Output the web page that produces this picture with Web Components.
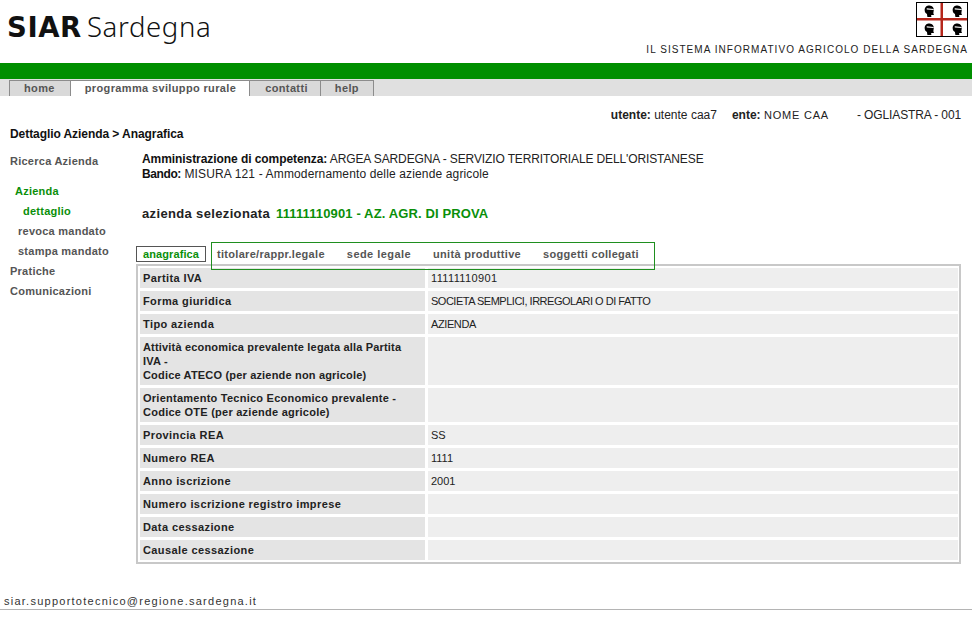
<!DOCTYPE html>
<html lang="it">
<head>
<meta charset="utf-8">
<title>SIAR Sardegna</title>
<style>
	html, body { margin: 0; background: #fff; }
	body { font: 12px 'Liberation Sans', Arial, sans-serif; color: #111; }
	siar-page { width: 972px; }
</style>
</head>
<body>
<siar-page>
	<siar-header slot="header"></siar-header>
	<siar-nav slot="nav">
		<nav-tab style="padding-right:15px">home</nav-tab>
		<nav-tab active style="padding-right:13px">programma sviluppo rurale</nav-tab>
		<nav-tab style="padding:0 12px 0 15px">contatti</nav-tab>
		<nav-tab>help</nav-tab>
	</siar-nav>
	<user-line slot="user"></user-line>
	<side-menu slot="side">
		<menu-item>Ricerca Azienda</menu-item>
		<menu-item level="top" active style="margin-top:10px">Azienda</menu-item>
		<menu-item level="sub" active>dettaglio</menu-item>
		<menu-item level="mid">revoca mandato</menu-item>
		<menu-item level="mid">stampa mandato</menu-item>
		<menu-item>Pratiche</menu-item>
		<menu-item>Comunicazioni</menu-item>
	</side-menu>
	<azienda-info slot="main"></azienda-info>
	<tab-strip slot="main"></tab-strip>
	<data-panel slot="main">
		<data-row label="Partita IVA" style="--value-spacing:.36px">11111110901</data-row>
		<data-row label="Forma giuridica" style="--value-spacing:-.49px">SOCIETA SEMPLICI, IRREGOLARI O DI FATTO</data-row>
		<data-row label="Tipo azienda" style="--value-spacing:-.4px">AZIENDA</data-row>
		<data-row label="Attività economica prevalente legata alla Partita IVA -&#10;Codice ATECO (per aziende non agricole)" style="--label-spacing:.18px"></data-row>
		<data-row label="Orientamento Tecnico Economico prevalente -&#10;Codice OTE (per aziende agricole)" style="--label-spacing:.25px"></data-row>
		<data-row label="Provincia REA">SS</data-row>
		<data-row label="Numero REA">1111</data-row>
		<data-row label="Anno iscrizione">2001</data-row>
		<data-row label="Numero iscrizione registro imprese"></data-row>
		<data-row label="Data cessazione"></data-row>
		<data-row label="Causale cessazione"></data-row>
	</data-panel>
	<siar-footer slot="footer"></siar-footer>
</siar-page>

<script>
const html = String.raw;

function define(name, markup, setup) {
	customElements.define(name, class extends HTMLElement {
		constructor() {
			super();
			this.attachShadow({ mode: 'open' }).innerHTML = markup;
		}
		connectedCallback() {
			if (setup) setup(this);
		}
	});
}

define('siar-page', html`
	<style>
		:host { display: block; }
		.body { display: flex; }
		.side { width: 136px; flex: none; }
		.main { width: 825px; flex: none; }
	</style>
	<slot name="header"></slot>
	<slot name="nav"></slot>
	<slot name="user"></slot>
	<div class="body">
		<div class="side"><slot name="side"></slot></div>
		<div class="main"><slot name="main"></slot></div>
	</div>
	<slot name="footer"></slot>
`);

// the moor's head, drawn once and reused in each quarter of the flag
const moor = html`
	<path d="M1.5 4.5 C1.5 1.5 4 .2 6 .4 C8.6 .6 10 2.4 9.8 4.6 L9.4 7.4 L10 9 L7.4 9 L7.6 11 L4 11 L3.6 8.2 C2.2 7.4 1.5 6.2 1.5 4.5 Z" fill="#000"/>
	<path d="M3.4 3 L9.6 3.7 L9.7 4.5 L3.4 4 Z" fill="#fff"/>
`;

define('siar-header', html`
	<style>
		:host { display: flex; justify-content: space-between; height: 63px; overflow: hidden; }
		.logo { display: flex; align-items: baseline; padding: 9px 0 0 7px; line-height: 36px; color: #111; white-space: nowrap; }
		.logo b { font: bold 27.5px/36px 'DejaVu Sans', sans-serif; letter-spacing: .6px; }
		.logo span { font: 300 27.5px/36px 'Noto Sans', sans-serif; margin-left: 5px; letter-spacing: .65px; }
		.right { display: flex; flex-direction: column; align-items: flex-end; padding: 2px 4px 0 0; }
		svg { display: block; }
		.tag { margin-top: 7px; font: 10px/12px 'Liberation Sans', sans-serif; letter-spacing: 1.05px; color: #222; white-space: nowrap; }
	</style>
	<div class="logo"><b>SIAR</b><span>Sardegna</span></div>
	<div class="right">
		<svg width="52" height="35" viewBox="0 0 52 35">
			<rect x=".5" y=".5" width="51" height="34" fill="#fff" stroke="#000"/>
			<path d="M24.5 1h2.5v33h-2.5zM1 16h50v2.6H1z" fill="#b5261b"/>
			<g transform="translate(7 3) scale(1.1)">${moor}</g>
			<g transform="translate(35 3) scale(1.1)">${moor}</g>
			<g transform="translate(7 21) scale(1.1)">${moor}</g>
			<g transform="translate(35 21) scale(1.1)">${moor}</g>
		</svg>
		<div class="tag">IL SISTEMA INFORMATIVO AGRICOLO DELLA SARDEGNA</div>
	</div>
`);

define('siar-nav', html`
	<style>
		:host { display: block; border-top: 16px solid #008f00; background: #e0e0e0; height: 17px; }
		.tabs { display: flex; padding: 1px 0 0 9px; }
	</style>
	<div class="tabs"><slot></slot></div>
`);

define('nav-tab', html`
	<style>
		:host { display: block; height: 15px; padding: 0 14px; margin-right: -1px; border: 1px solid #8c8c8c; border-bottom: 0; background: #d9d9d9; font: bold 11px/15px 'Liberation Sans', sans-serif; letter-spacing: .36px; color: #555; white-space: nowrap; }
		:host([active]) { background: #fff; }
	</style>
	<slot></slot>
`);

define('user-line', html`
	<style>
		:host { display: flex; justify-content: flex-end; height: 37px; padding: 12px 11px 0 0; box-sizing: border-box; font: 12px/14px 'Liberation Sans', sans-serif; color: #222; position: relative; }
		.ente { margin-left: 15px; }
		.nome { letter-spacing: .8px; font-size: 11px; }
		.prov { margin-left: 28px; letter-spacing: -.12px; }
		.crumb { position: absolute; left: 10px; top: 31px; font: bold 12px/15px 'Liberation Sans', sans-serif; letter-spacing: -.07px; color: #111; }
	</style>
	<span><b>utente:</b> utente caa7</span>
	<span class="ente"><b>ente:</b> <span class="nome">NOME CAA</span></span>
	<span class="prov">- OGLIASTRA - 001</span>
	<div class="crumb">Dettaglio Azienda &gt; Anagrafica</div>
`);

define('side-menu', html`
	<style>
		:host { display: block; padding-top: 18px; }
	</style>
	<slot></slot>
`);

define('menu-item', html`
	<style>
		:host { display: block; height: 20px; padding-left: 10px; font: bold 11px/20px 'Liberation Sans', sans-serif; letter-spacing: .25px; color: #555; white-space: nowrap; }
		:host([level=top]) { padding-left: 15px; }
		:host([level=mid]) { padding-left: 18px; }
		:host([level=sub]) { padding-left: 23px; }
		:host([active]) { color: #0a8f0a; }
	</style>
	<slot></slot>
`);

define('azienda-info', html`
	<style>
		:host { display: block; padding: 19px 0 0 6px; height: 109px; box-sizing: border-box; font: 12px/15px 'Liberation Sans', sans-serif; letter-spacing: -.12px; color: #222; }
		b { color: #111; letter-spacing: -.07px; }
		.bando { letter-spacing: .14px; }
		.bando b { letter-spacing: -.4px; }
		h2 { margin: 24px 0 0; font: bold 13px/16px 'Liberation Sans', sans-serif; letter-spacing: .35px; color: #222; }
		h2 span { color: #0a8f0a; margin-left: 2px; letter-spacing: .13px; }
	</style>
	<div><b>Amministrazione di competenza:</b> ARGEA SARDEGNA - SERVIZIO TERRITORIALE DELL'ORISTANESE</div>
	<div class="bando"><b>Bando:</b> MISURA 121 - Ammodernamento delle aziende agricole</div>
	<h2>azienda selezionata <span>11111110901 - AZ. AGR. DI PROVA</span></h2>
`);

define('tab-strip', html`
	<style>
		:host { display: flex; height: 22px; font: bold 11px/14px 'Liberation Sans', sans-serif; letter-spacing: .3px; color: #555; position: relative; z-index: 1; }
		.on { align-self: flex-start; margin-top: 4px; height: 14px; padding: 0 6px; border: 1px solid #555; color: #0a8f0a; background: #fff; letter-spacing: .1px; }
		.box { display: flex; gap: 22px; margin-left: 5px; width: 444px; height: 28px; box-sizing: border-box; border: 1px solid #1f8f1f; padding: 4px 0 0 5px; }
		.sede { letter-spacing: .45px; }
	</style>
	<div class="on">anagrafica</div>
	<div class="box">
		<span>titolare/rappr.legale</span>
		<span class="sede">sede legale</span>
		<span>unità produttive</span>
		<span>soggetti collegati</span>
	</div>
`);

define('data-panel', html`
	<style>
		:host { display: flex; flex-direction: column; gap: 3px; width: 825px; height: 300px; box-sizing: border-box; border: 2px solid #c8c8c8; padding: 2px 2px 0; }
	</style>
	<slot></slot>
`);

define('data-row', html`
	<style>
		:host { display: grid; grid-template-columns: 285px 530px; gap: 3px; }
		div { padding: 3px; line-height: 14px; font-size: 11px; font-family: 'Liberation Sans', sans-serif; color: #222; }
		.l { background: #e4e4e4; font-weight: bold; letter-spacing: var(--label-spacing, .4px); white-space: pre-line; }
		.v { background: #eee; letter-spacing: var(--value-spacing, 0); }
	</style>
	<div class="l"></div>
	<div class="v"><slot></slot></div>
`, (el) => {
	el.shadowRoot.querySelector('.l').textContent = el.getAttribute('label');
});

define('siar-footer', html`
	<style>
		:host { display: block; margin-top: 29px; height: 17px; box-sizing: border-box; border-bottom: 1px solid #b4b4b4; padding-left: 4px; font: 11px/16px 'Liberation Sans', sans-serif; letter-spacing: 1.25px; color: #333; }
	</style>
	siar.supportotecnico@regione.sardegna.it
`);
</script>
</body>
</html>
